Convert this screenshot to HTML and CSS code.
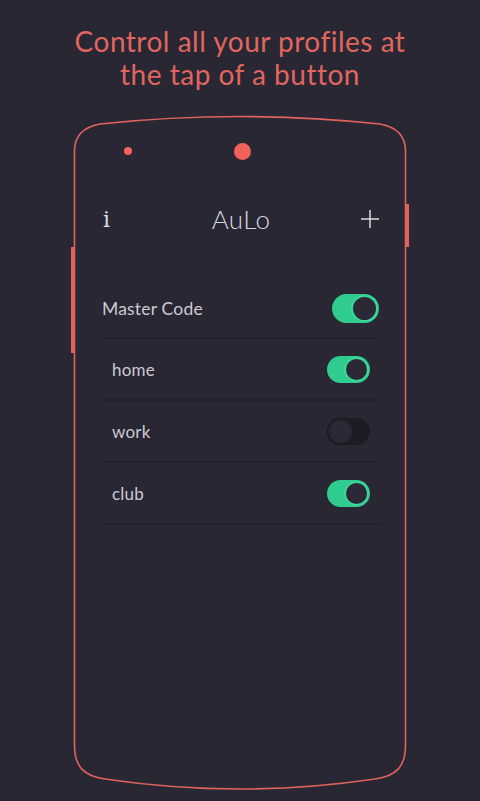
FILE: index.html
```html
<!DOCTYPE html>
<html>
<head>
<meta charset="utf-8">
<link rel="stylesheet" href="styles.css">
</head>
<body>
<h1 class="headline">Control all your profiles at<br>the tap of a button</h1>
<div class="phone">
  <svg class="frame" width="342" height="690" viewBox="0 0 342 690" xmlns="http://www.w3.org/2000/svg">
    <path d="M4.5 42 C4.5 26 14 18 30 15 Q170 0 310 15 C326 18 335.5 26 335.5 42 L335.5 636 C335.5 658 326 667 305 670 Q170 690 35 670 C14 667 4.5 658 4.5 636 Z" fill="none" stroke="#e0635c" stroke-width="1.6"/>
    <rect x="335.5" y="95" width="3.5" height="43" fill="#e0635c"/>
    <rect x="1" y="138" width="3.5" height="106" fill="#e0635c"/>
  </svg>
  <div class="dots">
    <span class="dot small"></span>
    <span class="dot big"></span>
  </div>
  <div class="content">
    <header class="appbar">
      <span class="info">i</span>
      <span class="title">AuLo</span>
      <span class="plus"><svg width="20" height="20" viewBox="0 0 20 20"><path d="M10 1 V19 M1 10 H19" stroke="#dcdbe4" stroke-width="1.5" fill="none"/></svg></span>
    </header>
    <div class="row master">
      <span class="label">Master Code</span>
      <span class="toggle on big-toggle"><span class="knob"></span></span>
    </div>
    <div class="row sub">
      <span class="label">home</span>
      <span class="toggle on"><span class="knob"></span></span>
    </div>
    <div class="row sub">
      <span class="label">work</span>
      <span class="toggle off"><span class="knob"></span></span>
    </div>
    <div class="row sub">
      <span class="label">club</span>
      <span class="toggle on"><span class="knob"></span></span>
    </div>
  </div>
</div>
</body>
</html>
```
FILE: styles.css
```css
html, body {
  margin: 0;
  padding: 0;
  background: #282733;
  height: 801px;
  overflow: hidden;
}
body {
  font-family: Lato, "Open Sans", sans-serif;
}
.headline {
  margin: 0;
  padding-top: 25px;
  font-weight: 400;
  font-size: 28px;
  line-height: 33px;
  color: #e0665f;
  text-align: center;
  letter-spacing: 0.5px;
}
.phone {
  position: relative;
  margin-top: 18px;
  margin-left: 70px;
  width: 342px;
  height: 690px;
}
.frame {
  position: absolute;
  left: 0;
  top: 0;
}
.dots {
  display: flex;
  align-items: center;
  padding-top: 34px;
  padding-left: 54px;
  gap: 102px;
  height: 16px;
}
.dot {
  display: block;
  border-radius: 50%;
  background: #f0625b;
}
.dot.small { width: 8px; height: 8px; }
.dot.big { width: 17px; height: 17px; }
.content {
  padding: 0 32px;
}
.appbar {
  margin-top: 40px;
  height: 40px;
  display: grid;
  grid-template-columns: 1fr auto 1fr;
  align-items: center;
}
.info {
  font-family: "DejaVu Serif", serif;
  font-weight: 400;
  font-size: 22px;
  color: #dcdbe4;
  padding-left: 1px;
}
.title {
  font-size: 26px;
  color: #d8d7e2;
  font-weight: 300;
  letter-spacing: 0.3px;
}
.plus {
  justify-self: end;
  display: flex;
}
.row {
  display: flex;
  align-items: center;
  justify-content: space-between;
  border-bottom: 2px solid #23222c;
}
.row.master {
  margin-top: 40px;
  height: 58px;
}
.row.sub {
  height: 60px;
  padding: 0 10px;
}
.label {
  font-size: 17px;
  color: #cbcad4;
  letter-spacing: 0.2px;
}
.master .label { font-size: 17.5px; }
.toggle {
  position: relative;
  display: block;
  width: 43px;
  height: 27px;
  border-radius: 14px;
  box-sizing: border-box;
}
.toggle.big-toggle {
  width: 47px;
  height: 29px;
  border-radius: 15px;
  margin-right: 1px;
}
.toggle.on {
  background: #2fcb8f;
}
.toggle.off {
  background: #1d1c26;
}
.knob {
  position: absolute;
  top: 1px;
  width: 21px;
  height: 21px;
  border-radius: 50%;
  background: #2a2935;
  border: 2px solid #3dd699;
}
.big-toggle .knob {
  width: 23px;
  height: 23px;
}
.on .knob { right: 1px; }
.off .knob {
  left: 1px;
  border-color: #25242f;
  background: #2a2935;
  box-shadow: 0 0 3px rgba(0,0,0,0.4);
}
```
